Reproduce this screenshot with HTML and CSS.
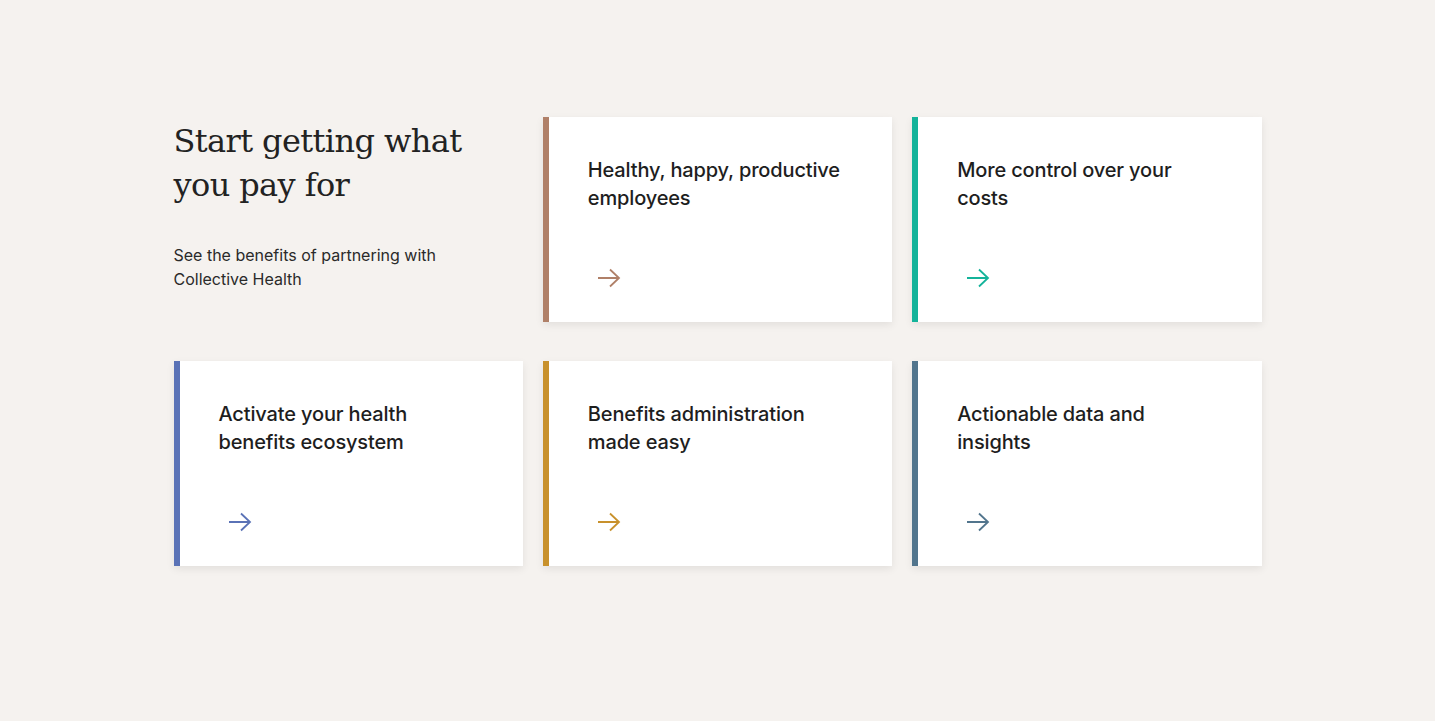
FILE: index.html
```html
<!DOCTYPE html>
<html lang="en">
<head>
<meta charset="utf-8">
<title>Start getting what you pay for</title>
<link rel="stylesheet" href="styles.css">
</head>
<body>
<main class="section">
  <div class="grid">
    <div class="intro">
      <h2 class="intro-title">Start getting what you pay for</h2>
      <p class="intro-text">See the benefits of partnering with Collective Health</p>
    </div>
    <a class="card card-brown" href="#">
      <span class="card-title">Healthy, happy, productive employees</span>
      <svg class="arrow" viewBox="0 0 24 20" width="24" height="20"><path d="M1 10H22M13 1.5L22 10L13 18.5" fill="none" stroke="currentColor" stroke-width="1.8"/></svg>
    </a>
    <a class="card card-teal" href="#">
      <span class="card-title">More control over your costs</span>
      <svg class="arrow" viewBox="0 0 24 20" width="24" height="20"><path d="M1 10H22M13 1.5L22 10L13 18.5" fill="none" stroke="currentColor" stroke-width="1.8"/></svg>
    </a>
    <a class="card card-blue" href="#">
      <span class="card-title">Activate your health benefits ecosystem</span>
      <svg class="arrow" viewBox="0 0 24 20" width="24" height="20"><path d="M1 10H22M13 1.5L22 10L13 18.5" fill="none" stroke="currentColor" stroke-width="1.8"/></svg>
    </a>
    <a class="card card-gold" href="#">
      <span class="card-title">Benefits administration made easy</span>
      <svg class="arrow" viewBox="0 0 24 20" width="24" height="20"><path d="M1 10H22M13 1.5L22 10L13 18.5" fill="none" stroke="currentColor" stroke-width="1.8"/></svg>
    </a>
    <a class="card card-slate" href="#">
      <span class="card-title">Actionable data and insights</span>
      <svg class="arrow" viewBox="0 0 24 20" width="24" height="20"><path d="M1 10H22M13 1.5L22 10L13 18.5" fill="none" stroke="currentColor" stroke-width="1.8"/></svg>
    </a>
  </div>
</main>
</body>
</html>
```
FILE: styles.css
```css
* { box-sizing: border-box; }
html, body { margin: 0; padding: 0; }
body {
  background: #f5f2ef;
  color: #222;
  font-family: "Inter", "Liberation Sans", sans-serif;
  height: 721px;
}
.section {
  padding-top: 117px;
  display: flex;
  justify-content: center;
}
.grid {
  width: 1088px;
  display: grid;
  grid-template-columns: repeat(3, 1fr);
  column-gap: 20px;
  row-gap: 39px;
}
.intro { padding-top: 2px; }
.intro-title {
  margin: 0;
  font-family: "DejaVu Serif", "Liberation Serif", serif;
  font-weight: 400;
  font-size: 32px;
  line-height: 44px;
  color: #222;
  letter-spacing: -0.6px;
  width: 300px;
}
.intro-text {
  margin: 36px 0 0;
  font-size: 16px;
  line-height: 24px;
  color: #2a2a2a;
  width: 290px;
}
.card {
  height: 205px;
  background: #fff;
  border-left: 6px solid;
  padding: 39px 40px 34px 39px;
  display: flex;
  flex-direction: column;
  justify-content: space-between;
  text-decoration: none;
  box-shadow: 0 3px 8px rgba(0,0,0,0.08);
}
.card-title {
  font-size: 20px;
  font-weight: 500;
  line-height: 28px;
  color: #1e1e1e;
  letter-spacing: -0.15px;
  max-width: 256px;
}
.arrow { margin-left: 9px; display: block; }
.card-brown { border-color: #b08068; }
.card-brown .arrow { color: #b08068; }
.card-teal { border-color: #14b39a; }
.card-teal .arrow { color: #14b39a; }
.card-blue { border-color: #5a72b6; }
.card-blue .arrow { color: #5a72b6; }
.card-gold { border-color: #c8912c; }
.card-gold .arrow { color: #c8912c; }
.card-slate { border-color: #52758d; }
.card-slate .arrow { color: #52758d; }
```
